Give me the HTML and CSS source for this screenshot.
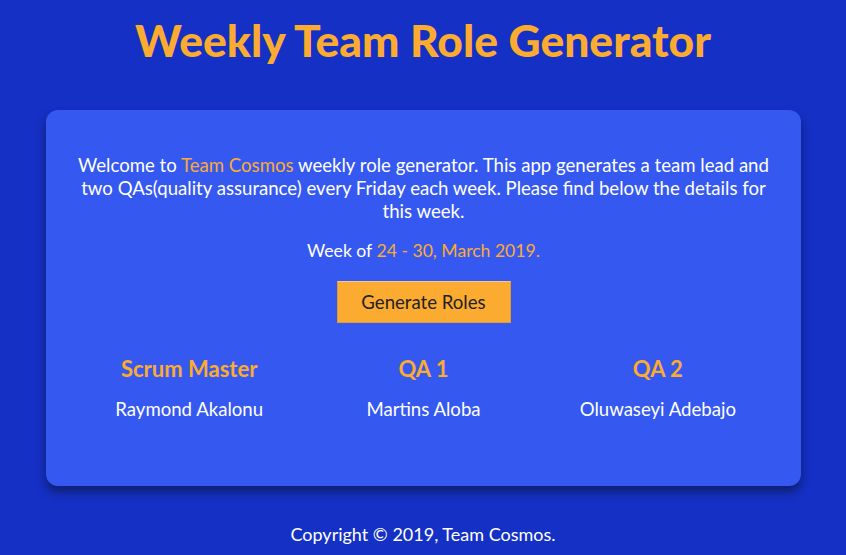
FILE: index.html
```html
<!DOCTYPE html>
<html>
<head>
<meta charset="utf-8">
<link rel="stylesheet" href="styles.css">
</head>
<body>
<h1 class="title">Weekly Team Role Generator</h1>
<main class="card">
  <p class="intro">Welcome to <span class="accent">Team Cosmos</span> weekly role generator. This app generates a team lead and two QAs(quality assurance) every Friday each week. Please find below the details for this week.</p>
  <p class="week">Week of <span class="accent">24 - 30, March 2019.</span></p>
  <button class="btn">Generate Roles</button>
  <div class="roles">
    <div class="role"><h2 class="role-title">Scrum Master</h2><p class="role-name">Raymond Akalonu</p></div>
    <div class="role"><h2 class="role-title">QA 1</h2><p class="role-name">Martins Aloba</p></div>
    <div class="role"><h2 class="role-title">QA 2</h2><p class="role-name">Oluwaseyi Adebajo</p></div>
  </div>
</main>
<footer class="footer">Copyright © 2019, Team Cosmos.</footer>
</body>
</html>
```
FILE: styles.css
```css
* { box-sizing: border-box; }
html, body { margin: 0; padding: 0; }
body {
  background: #1530c4;
  font-family: Lato, "Open Sans", sans-serif;
  color: #fff;
  width: 846px;
  height: 555px;
  overflow: hidden;
}
.title {
  margin: 0;
  padding-top: 14px;
  height: 110px;
  text-align: center;
  font-family: Lato, sans-serif;
  font-weight: 900;
  font-size: 44.4px;
  line-height: 52px;
  color: #fcab31;
}
.card {
  margin: 0 45px 0 46px;
  height: 376px;
  background: #3559f0;
  border-radius: 12px;
  box-shadow: 0 6px 10px rgba(10, 20, 60, 0.6);
  padding: 44px 26px 0;
  display: flex;
  flex-direction: column;
  align-items: center;
  text-align: center;
}
.intro {
  margin: 0;
  font-size: 18.6px;
  line-height: 23px;
}
.accent { color: #fcab31; }
.week {
  margin: 16px 0 0;
  font-size: 17.6px;
  line-height: 23px;
}
.btn {
  margin-top: 18.5px;
  width: 174px;
  height: 42px;
  background: #fcab31;
  border: 1px solid #d99a3a;
  border-top-color: #f5c98a;
  font-family: Lato, sans-serif;
  font-size: 18.6px;
  color: #222;
  cursor: pointer;
}
.roles {
  margin-top: 33px;
  width: 100%;
  display: grid;
  grid-template-columns: repeat(3, 1fr);
}
.role-title {
  margin: 0;
  font-size: 22px;
  font-weight: 700;
  color: #fcab31;
  line-height: 26px;
}
.role-name {
  margin: 16.5px 0 0;
  font-size: 18.6px;
  line-height: 23px;
}
.footer {
  text-align: center;
  margin-top: 36.5px;
  font-size: 18px;
  line-height: 23px;
}
```
